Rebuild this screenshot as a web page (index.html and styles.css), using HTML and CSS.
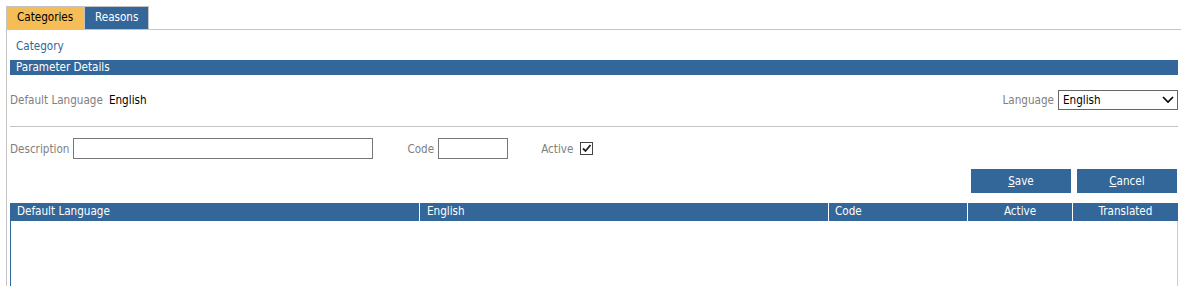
FILE: index.html
```html
<!DOCTYPE html>
<html lang="en">

<head>
    <meta charset="UTF-8" />
    <title>Parameter Details</title>
    <link rel="stylesheet" href="styles.css">
</head>

<body>
    <div class="page">
        <nav class="tabs">
            <span class="tab tab-active">Categories</span>
            <span class="tab">Reasons</span>
        </nav>

        <main class="panel">
            <h1 class="panel-title">Category</h1>
            <h2 class="section-bar">Parameter Details</h2>

            <div class="lang-row">
                <div class="field field-default">
                    <span class="label">Default Language</span>
                    <span class="value">English</span>
                </div>
                <div class="field">
                    <span class="label">Language</span>
                    <div class="select-wrap">
                        <select class="select">
                            <option>English</option>
                        </select>
                        <svg class="chevron" width="12" height="8" viewBox="0 0 12 8">
                            <path d="M1 1 L6 6 L11 1" fill="none" stroke="#000" stroke-width="1.6" />
                        </svg>
                    </div>
                </div>
            </div>

            <hr class="divider">

            <div class="form-row">
                <label class="field">
                    <span class="label">Description</span>
                    <input class="input input-wide" type="text">
                </label>
                <label class="field field-code">
                    <span class="label">Code</span>
                    <input class="input input-short" type="text">
                </label>
                <label class="field field-active">
                    <span class="label">Active</span>
                    <span class="checkbox">
                        <svg width="11" height="11" viewBox="0 0 11 11">
                            <path d="M2 5.5 L4.5 8 L9.5 2" fill="none" stroke="#222" stroke-width="1.8" />
                        </svg>
                    </span>
                </label>
            </div>

            <div class="button-row">
                <button class="btn"><u>S</u>ave</button>
                <button class="btn"><u>C</u>ancel</button>
            </div>

            <div class="grid">
                <div class="grid-head">
                    <span class="col col-default">Default Language</span>
                    <span class="col col-english">English</span>
                    <span class="col col-code">Code</span>
                    <span class="col col-active">Active</span>
                    <span class="col col-translated">Translated</span>
                </div>
                <div class="grid-body"></div>
            </div>
        </main>
    </div>
</body>

</html>
```

FILE: styles.css
```css
:root {
    --blue: #336699;
    --orange: #f6bc55;
    --grey-line: #c4c4c4;
    --label: #808080;
}

* {
    margin: 0;
    padding: 0;
    box-sizing: border-box;
}

body {
    font-family: 'DejaVu Sans Condensed', 'DejaVu Sans', sans-serif;
    font-size: 11.6px;
    background-color: white;
    color: #000;
}

.page {
    padding: 6px 0 0 6px;
}

/* tabs */
.tabs {
    display: flex;
    border-bottom: 1px solid var(--grey-line);
}

.tab {
    height: 23px;
    line-height: 21px;
    padding: 0 10px;
    border: 1px solid var(--grey-line);
    border-bottom: none;
    background-color: var(--blue);
    color: white;
}

.tab + .tab {
    border-left: none;
}

.tab-active {
    width: 79px;
    background-color: var(--orange);
    color: #000;
}

/* panel */
.panel {
    display: flex;
    flex-direction: column;
    border-left: 1px solid var(--grey-line);
    padding: 0 3px 0 3px;
    height: 256px;
}

.panel-title {
    font-size: 11.6px;
    font-weight: normal;
    color: var(--blue);
    padding: 9px 0 0 6px;
    line-height: 15px;
}

.section-bar {
    margin-top: 6px;
    height: 15px;
    line-height: 14px;
    font-size: 11.6px;
    font-weight: normal;
    background-color: var(--blue);
    color: white;
    padding-left: 6px;
}

.lang-row {
    display: flex;
    justify-content: space-between;
    align-items: center;
    margin-top: 15px;
    height: 20px;
}

.field {
    display: flex;
    align-items: center;
    gap: 4px;
}

.field-default {
    gap: 6px;
}

.label {
    color: var(--label);
}

.select-wrap {
    position: relative;
    width: 120px;
    height: 20px;
}

.select {
    appearance: none;
    width: 100%;
    height: 100%;
    border: 1px solid #666;
    background: white;
    font: inherit;
    padding-left: 4px;
    color: #000;
}

.chevron {
    position: absolute;
    right: 4px;
    top: 6px;
    pointer-events: none;
}

.divider {
    border: none;
    border-top: 1px solid var(--grey-line);
    margin-top: 16px;
}

.form-row {
    display: flex;
    align-items: center;
    margin-top: 11px;
    height: 21px;
}

.input {
    height: 21px;
    border: 1px solid #777;
    font: inherit;
}

.input-wide {
    width: 300px;
}

.input-short {
    width: 70px;
}

.field-code {
    margin-left: 34px;
}

.field-active {
    margin-left: 33px;
    gap: 7px;
}

.checkbox {
    width: 13px;
    height: 13px;
    border: 1px solid #444;
    display: flex;
    align-items: center;
    justify-content: center;
}

.button-row {
    display: flex;
    justify-content: flex-end;
    gap: 6px;
    margin-top: 10px;
    padding-right: 1px;
}

.btn {
    width: 100px;
    height: 24px;
    border: none;
    background-color: var(--blue);
    color: white;
    font: inherit;
}

.grid {
    flex: 1;
    display: flex;
    flex-direction: column;
    margin-top: 10px;
}

.grid-head {
    display: grid;
    grid-template-columns: 409px 409px 139px 105px 1fr;
    height: 18px;
    background-color: var(--blue);
    color: white;
}

.col {
    line-height: 17px;
    padding-left: 7px;
    border-left: 1px solid white;
}

.col-default {
    border-left: none;
}

.col-code {
    padding-left: 6px;
}

.col-active,
.col-translated {
    text-align: center;
    padding-left: 0;
}

.grid-body {
    flex: 1;
    border-left: 1px solid var(--blue);
    border-right: 1px solid #ccc;
}
```
